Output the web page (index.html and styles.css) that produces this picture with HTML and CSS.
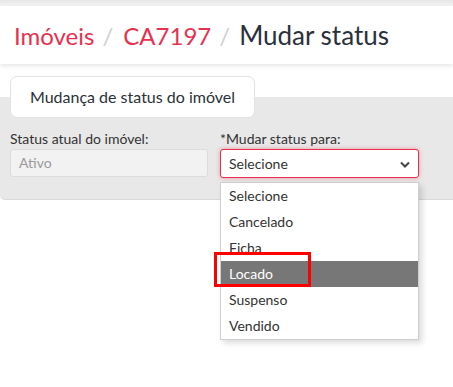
FILE: index.html
```html
<!DOCTYPE html>
<html>
<head>
<meta charset="utf-8">
<link rel="stylesheet" href="styles.css">
</head>
<body>
<div class="topstrip"></div>
<header class="header">
  <nav class="crumbs">
    <a class="crumb-link">Imóveis</a><span class="sep">/</span>
    <a class="crumb-link">CA7197</a><span class="sep">/</span>
    <span class="crumb-current">Mudar status</span>
  </nav>
</header>
<main class="content">
  <div class="tabs">
    <div class="tab">Mudança de status do imóvel</div>
  </div>
  <section class="panel">
    <div class="field">
      <label class="label">Status atual do imóvel:</label>
      <div class="input readonly">Ativo</div>
    </div>
    <div class="field field-select">
      <label class="label">*Mudar status para:</label>
      <div class="select">
        <span>Selecione</span>
        <svg class="chev" width="10" height="7" viewBox="0 0 10 7"><path d="M1 1.5 L5 5.5 L9 1.5" fill="none" stroke="#444" stroke-width="2"/></svg>
      </div>
      <ul class="dropdown">
        <li class="opt">Selecione</li>
        <li class="opt">Cancelado</li>
        <li class="opt">Ficha</li>
        <li class="opt active">Locado<span class="annot"></span></li>
        <li class="opt">Suspenso</li>
        <li class="opt">Vendido</li>
      </ul>
    </div>
  </section>
</main>
</body>
</html>
```
FILE: styles.css
```css
* { box-sizing: border-box; }
html, body { margin: 0; padding: 0; }
body {
  width: 453px;
  height: 387px;
  overflow: hidden;
  background: #fff;
  font-family: Lato, "Open Sans", sans-serif;
  color: #333;
}
.topstrip {
  height: 6px;
  background: linear-gradient(#e6e6e6, #f4f4f4);
}
.header {
  height: 58px;
  background: #fff;
  box-shadow: 0 2px 4px rgba(0,0,0,0.10);
  display: flex;
  align-items: center;
  padding-left: 14px;
  position: relative;
}
.crumbs {
  font-size: 24px;
  display: flex;
  align-items: baseline;
  line-height: 1;
  padding-bottom: 1px;
}
.crumb-link { color: #e8304f; }
.sep { color: #d0d0d0; margin: 0 10px 0 8px; }
.crumb-current { color: #2b313a; margin-left: -1px; font-size: 26px; }
.content { padding-top: 12px; }
.tabs { padding-left: 10px; height: 21px; position: relative; z-index: 2; }
.tab {
  display: inline-block;
  width: 245px;
  height: 42px;
  background: #fff;
  border: 1px solid #e2e2e2;
  border-radius: 7px;
  text-align: center;
  font-size: 16px;
  line-height: 40px;
  color: #2b313a;
}
.panel {
  background: #e8e8e8;
  border-bottom: 1px solid #d8d8d8;
  border-radius: 0 0 0 5px;
  height: 103px;
  display: flex;
  padding: 33px 0 0 10px;
  gap: 11px;
}
.field { width: 199px; position: relative; }
.label {
  display: block;
  font-size: 14px;
  line-height: 17px;
  color: #333;
  height: 19px;
}
.input {
  height: 28px;
  border: 1px solid #dcdcdc;
  border-radius: 3px;
  font-size: 14px;
  line-height: 26px;
  padding-left: 8px;
}
.readonly { background: #f2f2f2; color: #9a9a9a; width: 198px; }
.select {
  height: 29px;
  width: 199px;
  background: #fff;
  border: 1px solid #e8304f;
  border-radius: 3px;
  box-shadow: 0 0 4px rgba(232,48,79,0.45);
  font-size: 14px;
  line-height: 27px;
  padding-left: 8px;
  padding-right: 8px;
  color: #333;
  display: flex;
  justify-content: space-between;
  align-items: center;
}
.chev { margin-top: 1px; }
.dropdown {
  position: absolute;
  left: 0;
  top: 52px;
  width: 199px;
  margin: 0;
  padding: 0;
  list-style: none;
  background: #fff;
  border: 1px solid #cfcfcf;
  box-shadow: 3px 3px 6px rgba(0,0,0,0.15);
  z-index: 5;
}
.opt {
  height: 26px;
  line-height: 26px;
  font-size: 14px;
  padding-left: 8px;
  color: #333;
  position: relative;
}
.opt.active { background: #777; color: #fff; }
.annot {
  position: absolute;
  left: -7px;
  top: -9px;
  width: 97px;
  height: 35px;
  border: 3px solid #f00;
}
```
